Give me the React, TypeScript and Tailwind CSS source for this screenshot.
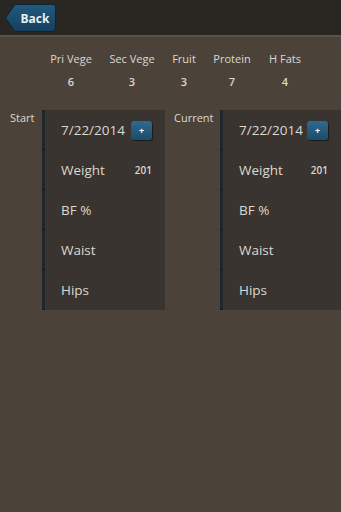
import React from "react";

const font = { fontFamily: '"Open Sans", "Noto Sans", sans-serif' };

function Row({ label, value, plus }: { label: string; value?: string; plus?: boolean }) {
  return (
    <div className="flex h-[40px]">
      <div className="w-[3px] bg-[#1f262d] border-b border-[#14181c]" />
      <div className="flex-1 flex items-center pl-[16px] pr-[13px] justify-between">
        <span className="text-[13.5px] text-[#ddd8cf]">{label}</span>
        {value && <span className="text-[10px] font-semibold text-[#ddd8cf]">{value}</span>}
        {plus && (
          <div className="w-[21px] h-[19px] rounded-[3px] bg-gradient-to-b from-[#2f6a92] to-[#1d4b6b] shadow-[1px_1px_1px_rgba(0,0,0,0.5)] flex items-center justify-center text-white text-[9px] font-bold leading-none">
            +
          </div>
        )}
      </div>
    </div>
  );
}

function Panel({ widthClass }: { widthClass: string }) {
  return (
    <div className={`${widthClass} bg-[#39342f]`}>
      <Row label="7/22/2014" plus />
      <Row label="Weight" value="201" />
      <Row label="BF %" />
      <Row label="Waist" />
      <Row label="Hips" />
    </div>
  );
}

export default function App() {
  const cols = [
    { l: "Pri Vege", v: "6", w: "w-[60px]" },
    { l: "Sec Vege", v: "3", w: "w-[62px]" },
    { l: "Fruit", v: "3", w: "w-[42px]" },
    { l: "Protein", v: "7", w: "w-[54px]" },
    { l: "H Fats", v: "4", w: "w-[52px]" },
  ];
  return (
    <div className="w-[341px] h-[512px] bg-[#4b4339] text-[#ddd8cf] overflow-hidden" style={font}>
      <div className="h-[37px] bg-[#2a2622] border-b-[2px] border-[#5a5246] flex items-center pl-[5px]">
        <svg width="51" height="28" viewBox="0 0 51 28" className="block">
          <defs>
            <linearGradient id="bg" x1="0" y1="0" x2="0" y2="1">
              <stop offset="0" stopColor="#215a80" />
              <stop offset="1" stopColor="#163f5c" />
            </linearGradient>
          </defs>
          <path d="M10 0.5 H48 Q50.5 0.5 50.5 3 V25 Q50.5 27.5 48 27.5 H10 L0.5 14 Z" fill="url(#bg)" stroke="#0f2535" strokeWidth="1" />
          <text x="30" y="18.5" textAnchor="middle" fontSize="12" fontWeight="700" fill="#e6eef3" style={font}>Back</text>
        </svg>
      </div>
      <div className="flex pl-[41px] pt-[14px]">
        {cols.map((c) => (
          <div key={c.l} className={`${c.w} flex flex-col items-center`}>
            <span className="text-[11px] leading-[16px] whitespace-nowrap">{c.l}</span>
            <span className="text-[11px] leading-[16px] mt-[7px] font-semibold">{c.v}</span>
          </div>
        ))}
      </div>
      <div className="flex mt-[20px]">
        <div className="w-[42px] pl-[10px] pt-[0px] text-[11px] leading-[16px]">Start</div>
        <Panel widthClass="w-[123px]" />
        <div className="w-[55px] pl-[9px] pt-[0px] text-[11px] leading-[16px]">Current</div>
        <Panel widthClass="flex-1" />
      </div>
    </div>
  );
}
